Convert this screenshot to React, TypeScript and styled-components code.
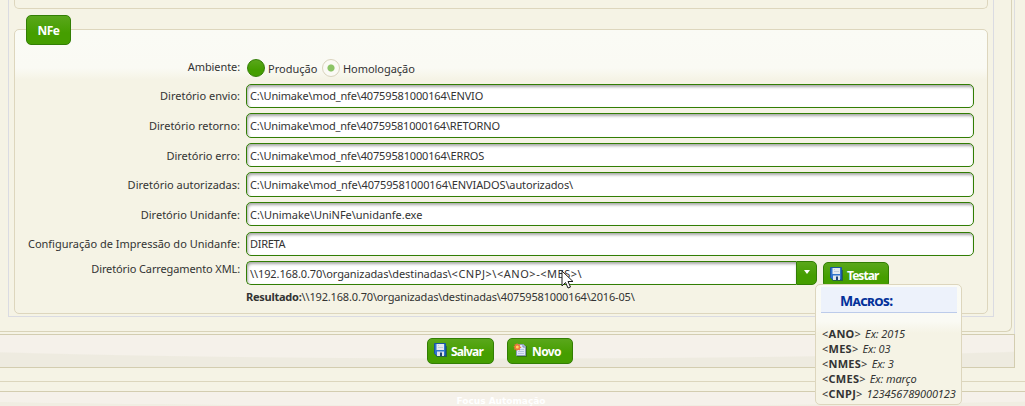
import React from "react";
import styled, { createGlobalStyle } from "styled-components";

const Global = createGlobalStyle`
  * { box-sizing: border-box; }
  body { margin: 0; background: #f5f3e5; overflow: hidden;
    font: 11px/16px "Noto Sans", "Open Sans", sans-serif; color: #333; }
`;

const Page = styled.div`
  width: 1025px;
  height: 406px;
  overflow: hidden;
  position: relative;
`;

const Window = styled.div`
  width: 1015px;
  height: 368px;
  border-right: 1px solid #dcdde0;
  display: flex;
  flex-direction: column;
`;

const Panel = styled.div`
  width: 1012px;
  height: 332px;
  flex: none;
  border: solid #d9d3b8;
  border-width: 0 1px 1px 0;
  border-radius: 0 0 6px 0;
`;

const TabBody = styled.div`
  width: 986px;
  height: 317px;
  margin-left: 8px;
  padding: 0 5px;
  border: solid #dadbe2;
  border-width: 0 1px 1px;
`;

const PreviousGroup = styled.div`
  width: 974px;
  height: 9px;
  border: 1px solid #ddd6bd;
  border-top: 0;
  border-radius: 0 0 5px 5px;
`;

const Group = styled.section`
  width: 974px;
  height: 285px;
  margin-top: 20px;
  border: 1px solid #ddd6bd;
  border-radius: 5px;
  background: linear-gradient(#fafbf5 0, #fafaf4 38px, #f5f3e5 50px);
`;

const Legend = styled.div`
  width: 45px;
  height: 30px;
  margin: -15px 0 0 11px;
  border: 1px solid #327e04;
  border-radius: 5px;
  background: linear-gradient(#5aa71b, #459e00 60%);
  color: #fff;
  font-weight: 700;
  font-size: 12px;
  letter-spacing: -0.5px;
  line-height: 29px;
  text-align: center;
`;

const Form = styled.div`
  padding-top: 11px;
`;

const Row = styled.div<{ $h: number; $gap: number }>`
  display: flex;
  height: ${(p) => p.$h}px;
  margin-bottom: ${(p) => p.$gap}px;
`;

const Label = styled.label<{ $top?: number }>`
  width: 225px;
  padding-top: ${(p) => p.$top ?? 4}px;
  margin-right: 6px;
  display: flex;
  justify-content: flex-end;
  flex: none;
  white-space: nowrap;
`;

const Text = styled.span<{ $ls?: number }>`
  display: block;
  white-space: pre;
  letter-spacing: ${(p) => p.$ls ?? 0}px;
`;

const Field = styled.div<{ $top?: number }>`
  width: 728px;
  padding: ${(p) => p.$top ?? 3}px 0 0 3px;
  border: 1px solid #327e04;
  border-radius: 5px;
  background: #fff;
  box-shadow: inset 1px 2px 3px rgba(0, 0, 0, 0.35);
`;

const ComboField = styled(Field)`
  width: 550px;
  display: flex;
  border-right: 0;
  border-radius: 5px 0 0 5px;
`;

const ComboArrow = styled.div`
  width: 21px;
  border: 1px solid #327e04;
  border-radius: 0 5px 5px 0;
  background: linear-gradient(#5aa71b, #459e00 60%);
  display: flex;
  justify-content: center;
  padding-top: 8px;
  &::after {
    content: "";
    height: 0;
    border: 3.5px solid transparent;
    border-top-width: 4px;
    border-top-color: #fff;
    border-bottom: 0;
  }
`;

const Radio = styled.span<{ $on?: boolean }>`
  width: 18px;
  height: 18px;
  margin-top: ${(p) => (p.$on ? 3 : 3)}px;
  margin-left: ${(p) => (p.$on ? 0 : 1)}px;
  flex: none;
  border-radius: 50%;
  border: 1px solid ${(p) => (p.$on ? "#d9d3bd" : "#327e04")};
  background: ${(p) =>
    p.$on
      ? "radial-gradient(circle, #8cc466 0 3.1px, #fbfaf5 4px)"
      : "linear-gradient(#5aa71b, #459e00 60%)"};
`;

const RadioLabel = styled.div<{ $w: number }>`
  width: ${(p) => p.$w}px;
  padding: 5px 0 0 3px;
`;

const Button = styled.button<{ $w: number; $gap?: number }>`
  width: ${(p) => p.$w}px;
  height: 26px;
  padding: 0 0 0 5px;
  display: flex;
  align-items: center;
  gap: ${(p) => p.$gap ?? 1}px;
  flex: none;
  border: 1px solid #327e04;
  border-radius: 5px;
  background: linear-gradient(#5aa71b, #459e00 60%);
  color: #fff;
  font: 700 12px/16px "Noto Sans", sans-serif;
`;

const ButtonText = styled(Text)`
  padding-top: 2px;
`;

const TestButton = styled(Button)`
  margin: 1px 0 0 6px;
`;

const Result = styled.div`
  display: flex;
  padding: 4px 0 0 231px;
`;

const Toolbar = styled.div`
  height: 34px;
  margin-top: 2px;
  width: 1015px;
  flex: none;
  border: 1px solid #d3cdb0;
  border-left: 0;
  display: flex;
  justify-content: center;
  gap: 13px;
  padding: 3px 14px 0 0;
  background: radial-gradient(ellipse 750px 24px at 500px 0, #f5f1ea 96%, #eeebe0 100%);
`;

const FooterTop = styled.div`
  height: 14px;
  border-bottom: 1px solid #dcd6bd;
`;

const Footer = styled.footer`
  height: 15px;
  margin-top: 9px;
  border-top: 1px solid #d3cdb0;
  padding: 4px 23px 0 0;
  display: flex;
  justify-content: center;
  color: #fff;
  font: 700 9px/11px "DejaVu Sans", sans-serif;
  background: radial-gradient(ellipse 750px 14px at 500px 0, #f5f1ea 96%, #f0ede2 100%);
`;

const Tooltip = styled.aside`
  position: absolute;
  left: 815px;
  top: 284px;
  width: 147px;
  height: 121px;
  padding: 2px 4px 0 5px;
  border: 1px solid #ddd6bd;
  border-radius: 5px;
  background: linear-gradient(#fafbf5 0, #fafaf4 36px, #f5f3e5 48px);
`;

const TipTitle = styled.h3`
  height: 26px;
  margin: 0 0 13px;
  padding-left: 19px;
  border-bottom: 1px solid #bccbea;
  background: #edf2fb;
  color: #03319a;
  font: 700 14px/28px "Noto Sans", sans-serif;
  font-variant: small-caps;
  letter-spacing: -0.6px;
`;

const Macro = styled.div`
  height: 15px;
  padding-left: 1px;
  line-height: 15px;
  display: flex;
  gap: 4px;
`;

const Cursor = styled.svg`
  position: absolute;
  left: 561px;
  top: 270px;
`;

const Disk = () => (
  <svg width="16" height="16" viewBox="0 0 16 16">
    <path d="M2 3h12v11H4l-1-1z" fill="#123c6e" opacity=".6" />
    <path d="M1.500 .5h11v12h-9l-2-2z" fill="#2f73cc" stroke="#1c549f" />
    <path d="M3.500 1h7.500v6H3.500z" fill="#e4e9ef" />
    <path d="M5 2h1v1H5zM5 4h5v1H5z" fill="#c2cedb" />
    <path d="M4 8.500h7V13H4z" fill="#dfe6ee" />
    <path d="M7 9.500h2V13H7z" fill="#1e4276" />
  </svg>
);

const NewPage = () => (
  <svg width="16" height="16" viewBox="0 0 16 16">
    <path d="M4 3h10v11H4z" fill="#224b19" opacity=".5" />
    <path d="M3.500 1.500h7l2 2v9h-9z" fill="#dfe8f6" stroke="#8b9bb8" />
    <path d="M10 2v2h2" fill="none" stroke="#7186aa" />
    <path d="M5 6.500h6M5 8.500h6M5 10.500h6" stroke="#b4c5df" />
    <path d="M4 0l1.200 1.600 2-.4-.4 2L8.400 4.400 6.800 5.400l.2 2-2-.6L3.800 8 2.800 6.400 1 6.600l.6-1.800L.4 3.800l1.400-1L1.600 1l1.600.6z" fill="#f0743c" />
    <circle cx="4.300" cy="4" r="1.500" fill="#ffd65a" />
  </svg>
);

const fields = [
  { label: "Diretório envio:", value: "C:\\Unimake\\mod_nfe\\40759581000164\\ENVIO", h: 24, gap: 5, ls: -0.16, top: 4 },
  { label: "Diretório retorno:", value: "C:\\Unimake\\mod_nfe\\40759581000164\\RETORNO", h: 25, gap: 5, ls: -0.18, top: 5 },
  { label: "Diretório erro:", value: "C:\\Unimake\\mod_nfe\\40759581000164\\ERROS", h: 24, gap: 5, ls: -0.16, top: 5 },
  { label: "Diretório autorizadas:", value: "C:\\Unimake\\mod_nfe\\40759581000164\\ENVIADOS\\autorizados\\", h: 25, gap: 5, ls: -0.12, top: 5 },
  { label: "Diretório Unidanfe:", value: "C:\\Unimake\\UniNFe\\unidanfe.exe", h: 24, gap: 6, ls: -0.03, top: 5 },
  { label: "Configuração de Impressão do Unidanfe:", value: "DIRETA", h: 24, gap: 5, ls: -0.3, top: 4 },
];

const macros = [
  ["ANO", "Ex: 2015"],
  ["MES", "Ex: 03"],
  ["NMES", "Ex: 3"],
  ["CMES", "Ex: março"],
  ["CNPJ", "123456789000123"],
];

export default function App() {
  return (
    <Page>
      <Global />
      <Window>
        <Panel>
          <TabBody>
            <PreviousGroup />
            <Group>
              <Legend>NFe</Legend>
              <Form>
                <Row $h={24} $gap={4}>
                  <Label $top={3}><Text $ls={-0.1}>Ambiente:</Text></Label>
                  <Radio />
                  <RadioLabel $w={57}><Text>Produção</Text></RadioLabel>
                  <Radio $on />
                  <RadioLabel $w={90}><Text $ls={-0.05}>Homologação</Text></RadioLabel>
                </Row>
                {fields.map((f) => (
                  <Row key={f.label} $h={f.h} $gap={f.gap}>
                    <Label $top={f.top}><Text>{f.label}</Text></Label>
                    <Field $top={f.top - 1}><Text $ls={f.ls}>{f.value}</Text></Field>
                  </Row>
                ))}
                <Row $h={24} $gap={0}>
                  <Label $top={0}><Text $ls={-0.12}>Diretório Carregamento XML:</Text></Label>
                  <ComboField $top={4}>
                    <Text $ls={-0.1}>{"\\\\192.168.0.70\\organizadas\\destinadas\\"}</Text>
                    <Text $ls={0.53}>{"<CNPJ>\\<ANO>-<MES>\\"}</Text>
                  </ComboField>
                  <ComboArrow />
                  <TestButton $w={66} $gap={2}><Disk /><ButtonText $ls={-0.95}>Testar</ButtonText></TestButton>
                </Row>
                <Result>
                  <Text $ls={-0.25}><b>Resultado:</b></Text>
                  <Text $ls={-0.16}>{"\\\\192.168.0.70\\organizadas\\destinadas\\40759581000164\\2016-05\\"}</Text>
                </Result>
              </Form>
            </Group>
          </TabBody>
        </Panel>
        <Toolbar>
          <Button $w={67} $gap={2}><Disk /><ButtonText $ls={-0.8}>Salvar</ButtonText></Button>
          <Button $w={66} $gap={3}><NewPage /><ButtonText $ls={-0.6}>Novo</ButtonText></Button>
        </Toolbar>
      </Window>
      <FooterTop />
      <Footer>Focus Automação</Footer>
      <Tooltip>
        <TipTitle>Macros:</TipTitle>
        {macros.map(([name, example]) => (
          <Macro key={name}>
            <Text $ls={0.25}>&lt;<b>{name}</b>&gt;</Text>
            <Text $ls={-0.12}><i>{example}</i></Text>
          </Macro>
        ))}
      </Tooltip>
      <Cursor width="13" height="20" viewBox="0 0 13 20">
        <path d="M1 1v15l3.500-3.500L7 18l2.500-1-2.500-5.500h5z" fill="#fff" stroke="#1a1a1a" />
      </Cursor>
    </Page>
  );
}
